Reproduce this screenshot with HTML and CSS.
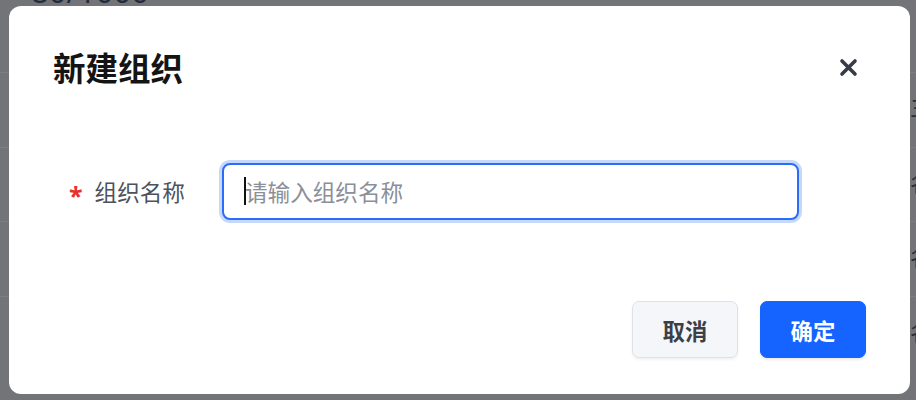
FILE: index.html
```html
<!DOCTYPE html>
<html lang="zh-CN">
<head>
<meta charset="utf-8">
<title>新建组织</title>
<link rel="stylesheet" href="styles.css">
</head>
<body>
<div class="page">
  <div class="bg-count">80/1000</div>
  <div class="bg-table">
    <div class="bg-row"><span class="bg-cell">三</span></div>
    <div class="bg-row"><span class="bg-cell">名</span></div>
    <div class="bg-row"><span class="bg-cell">名</span></div>
    <div class="bg-row"><span class="bg-cell">名</span></div>
  </div>

  <div class="modal" role="dialog" aria-labelledby="modal-title">
    <div class="modal-header">
      <h2 class="modal-title" id="modal-title">新建组织</h2>
      <button class="close-btn" type="button" aria-label="关闭">
        <svg width="19" height="19" viewBox="0 0 19 19" aria-hidden="true">
          <path d="M3 3 L16 16 M16 3 L3 16" stroke="#363b46" stroke-width="3.6" stroke-linecap="round" fill="none"/>
        </svg>
      </button>
    </div>
    <div class="modal-body">
      <div class="form-row">
        <label class="form-label" for="org-name"><span class="required">*</span>组织名称</label>
        <div class="field">
          <input class="text-input" id="org-name" type="text" placeholder="请输入组织名称">
          <span class="caret"></span>
        </div>
      </div>
    </div>
    <div class="modal-footer">
      <button class="btn btn-default" type="button">取消</button>
      <button class="btn btn-primary" type="button">确定</button>
    </div>
  </div>
</div>
</body>
</html>
```

FILE: styles.css
```css
* { box-sizing: border-box; }

html, body {
  margin: 0;
  padding: 0;
  width: 916px;
  height: 400px;
  overflow: hidden;
}

body {
  font-family: "Noto Sans CJK SC", "Noto Sans", sans-serif;
  background: #727478;
}

.page {
  position: relative;
  width: 916px;
  height: 400px;
  overflow: hidden;
}

.bg-count {
  position: absolute;
  left: 31px;
  top: -29px;
  font-family: "Noto Sans", sans-serif;
  font-size: 31px;
  line-height: 40px;
  color: #232b3d;
}

.bg-table {
  position: absolute;
  left: 0;
  top: 72px;
  width: 916px;
  display: flex;
  flex-direction: column;
}

.bg-row {
  height: 74.5px;
  border-top: 1px solid #7c7e82;
  position: relative;
}

.bg-cell {
  position: absolute;
  left: 910px;
  top: 18px;
  font-size: 22px;
  line-height: 30px;
  color: #262c38;
}

.modal {
  position: absolute;
  left: 9px;
  top: 6px;
  width: 901px;
  height: 388px;
  background: #fff;
  border-radius: 12px;
  padding: 40px 44px 36px 44px;
  display: flex;
  flex-direction: column;
}

.modal-header {
  height: 42px;
  display: flex;
  align-items: center;
  justify-content: space-between;
}

.modal-title {
  margin: 0;
  font-size: 32.5px;
  line-height: 42px;
  font-weight: 700;
  color: #141414;
}

.close-btn {
  border: 0;
  background: transparent;
  padding: 0;
  width: 19px;
  height: 19px;
  margin-right: 8px;
  display: flex;
  cursor: pointer;
}

.modal-body {
  padding-top: 75px;
}

.form-row {
  display: flex;
  align-items: center;
}

.form-label {
  width: 169px;
  padding-left: 16px;
  display: flex;
  align-items: center;
  font-size: 22.6px;
  color: #4d525c;
}

.required {
  color: #e5322d;
  font-family: "Noto Sans", sans-serif;
  font-size: 25px;
  font-weight: 700;
  margin-right: 12px;
  position: relative;
  top: 3px;
}

.field {
  position: relative;
  width: 577px;
  height: 57px;
}

.text-input {
  width: 100%;
  height: 100%;
  border: 2px solid #2b6cf8;
  border-radius: 8px;
  box-shadow: 0 0 0 3px #c7d8fd;
  padding: 0 0 0 21px;
  font-family: inherit;
  font-size: 22.6px;
  color: #1f2329;
  outline: none;
  background: #fff;
}

.text-input::placeholder {
  color: #8a8f99;
}

.caret {
  position: absolute;
  left: 22px;
  top: 14px;
  width: 2px;
  height: 28px;
  background: #111;
}

.modal-footer {
  margin-top: auto;
  display: flex;
  justify-content: flex-end;
  gap: 22px;
}

.btn {
  width: 106px;
  height: 57px;
  border-radius: 7px;
  font-family: inherit;
  font-size: 22.4px;
  font-weight: 700;
  cursor: pointer;
}

.btn-default {
  background: #f5f6f9;
  border: 1px solid #dde1e8;
  color: #3b3f48;
  box-shadow: 0 2px 3px rgba(0, 0, 0, 0.05);
}

.btn-primary {
  background: #1664ff;
  border: 1px solid #1664ff;
  color: #fff;
  box-shadow: 0 2px 3px rgba(0, 0, 0, 0.08);
}
```
